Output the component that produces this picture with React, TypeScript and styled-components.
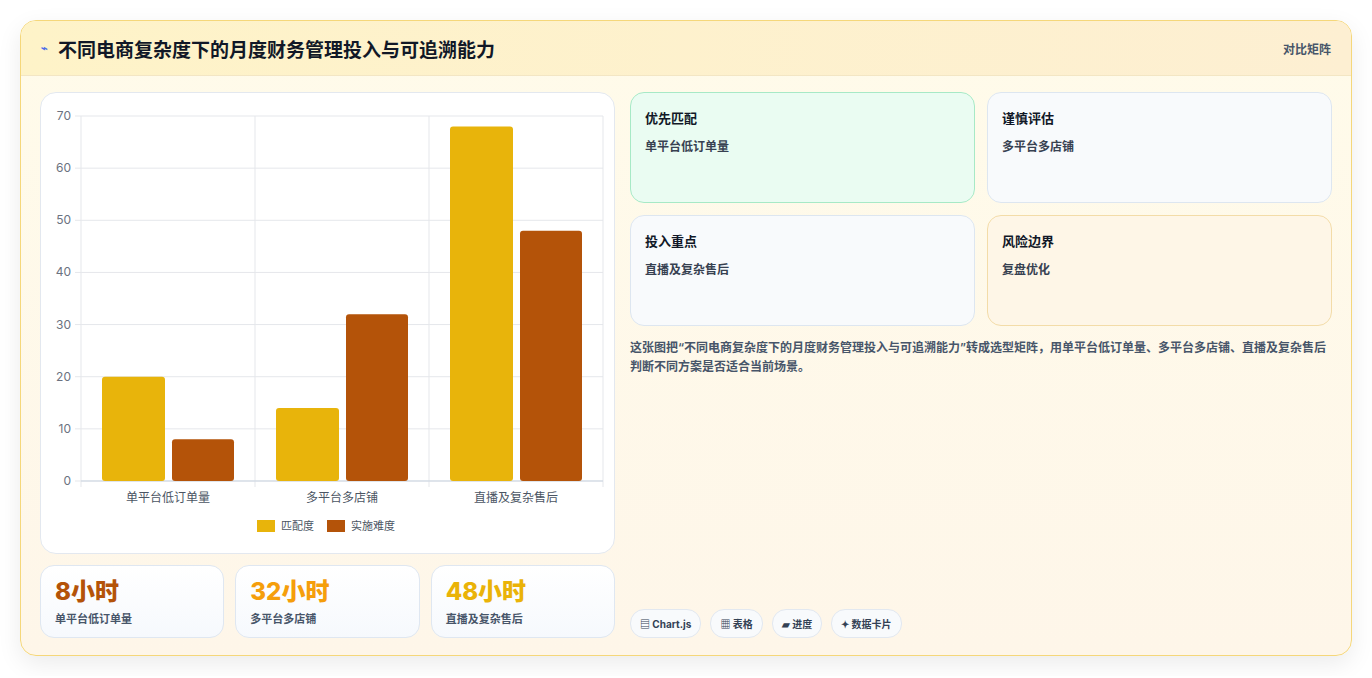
import React from "react";
import styled, { createGlobalStyle } from "styled-components";

const G = createGlobalStyle`
  body { margin:0; background:#fff; font-family: Inter, "Noto Sans CJK SC", sans-serif; }
`;
const Page = styled.div`padding:20px;`;
const Card = styled.div`
  height:636px; box-sizing:border-box; border:1px solid #f5d77a; border-radius:16px; overflow:hidden;
  background:linear-gradient(180deg,#fffbea,#fef6e9);
  box-shadow:0 8px 24px rgba(0,0,0,0.08); display:flex; flex-direction:column;
`;
const Header = styled.div`
  height:55px; flex:none; box-sizing:border-box; display:flex; align-items:center; justify-content:space-between;
  padding:0 20px; background:linear-gradient(90deg,#fef3c8,#fdefd2); border-bottom:1px solid #f3e6c4;
`;
const Title = styled.h1`margin:0; font-size:19px; font-weight:700; color:#111827; display:flex; align-items:center; gap:10px;`;
const Tag = styled.span`font-size:12px; color:#475569; font-weight:600;`;
const Body = styled.div`flex:1; display:grid; grid-template-columns:575px 1fr; gap:15px; padding:16px 19px 19px 19px;`;
const Col = styled.div`display:flex; flex-direction:column; gap:11px; min-height:0;`;
const ChartCard = styled.div`height:462px; box-sizing:border-box; background:#fff; border:1px solid #e3e8ef; border-radius:16px;`;
const Stats = styled.div`display:grid; grid-template-columns:repeat(3,1fr); gap:11px;`;
const Stat = styled.div`
  height:73px; box-sizing:border-box; border:1px solid #dfe7f1; border-radius:14px; padding:10px 14px;
  background:linear-gradient(180deg,#fff,#f6f9fd);
`;
const Big = styled.div<{ c: string }>`font-size:24px; font-weight:800; color:${p => p.c}; line-height:32px;`;
const Small = styled.div`font-size:11px; color:#475569; font-weight:600; margin-top:2px;`;
const Grid = styled.div`display:grid; grid-template-columns:1fr 1fr; gap:12px;`;
const Box = styled.div<{ bg: string; bd: string }>`
  height:111px; box-sizing:border-box; border-radius:14px; padding:15px 14px; background:${p => p.bg}; border:1px solid ${p => p.bd};
`;
const BoxT = styled.div`font-size:13px; font-weight:700; color:#111827;`;
const BoxS = styled.div`font-size:12px; font-weight:600; color:#374151; margin-top:10px;`;
const Para = styled.p`margin:0; font-size:12px; font-weight:600; color:#475569; line-height:19px;`;
const Tags = styled.div`margin-top:auto; display:flex; gap:9px;`;
const Pill = styled.span`
  font-size:10px; font-weight:700; color:#334155; border:1px solid #e2e8f0; background:#f8fafc; border-radius:14px; padding:6px 9px;
`;

const data = [["单平台低订单量", 20, 8], ["多平台多店铺", 14, 32], ["直播及复杂售后", 68, 48]] as const;

function Chart() {
  const x0 = 40, y0 = 388, w = 174, s = 365 / 70;
  return (
    <svg width="573" height="460" style={{ display: "block" }}>
      {[0, 10, 20, 30, 40, 50, 60, 70].map(v => (
        <g key={v}>
          <line x1={x0 - 6} x2={562} y1={y0 - v * s} y2={y0 - v * s} stroke="#e5e7eb" />
          <text x={x0 - 10} y={y0 - v * s + 4} fontSize="12" fill="#6b7280" textAnchor="end">{v}</text>
        </g>
      ))}
      {[0, 1, 2, 3].map(i => <line key={i} x1={x0 + i * w} x2={x0 + i * w} y1={23} y2={y0 + 6} stroke="#e5e7eb" />)}
      <line x1={x0} x2={562} y1={y0} y2={y0} stroke="#cbd5e1" />
      {data.map(([n, a, b], i) => (
        <g key={n}>
          <rect x={x0 + i * w + 21} y={y0 - a * s} width={63} height={a * s} rx={3} fill="#e8b40b" />
          <rect x={x0 + i * w + 91} y={y0 - b * s} width={62} height={b * s} rx={3} fill="#b45309" />
          <text x={x0 + i * w + 87} y={409} fontSize="12" fill="#4b5563" textAnchor="middle">{n}</text>
        </g>
      ))}
      <rect x={216} y={427} width={18} height={12} fill="#e8b40b" />
      <text x={240} y={437} fontSize="11" fill="#4b5563">匹配度</text>
      <rect x={286} y={427} width={18} height={12} fill="#b45309" />
      <text x={310} y={437} fontSize="11" fill="#4b5563">实施难度</text>
    </svg>
  );
}

export default function App() {
  return (
    <Page>
      <G />
      <Card>
        <Header>
          <Title><span style={{ fontSize: 11, color: "#4f6ee8" }}>⌁</span>不同电商复杂度下的月度财务管理投入与可追溯能力</Title>
          <Tag>对比矩阵</Tag>
        </Header>
        <Body>
          <Col>
            <ChartCard><Chart /></ChartCard>
            <Stats>
              <Stat><Big c="#b45309">8小时</Big><Small>单平台低订单量</Small></Stat>
              <Stat><Big c="#f59e0b">32小时</Big><Small>多平台多店铺</Small></Stat>
              <Stat><Big c="#eab308">48小时</Big><Small>直播及复杂售后</Small></Stat>
            </Stats>
          </Col>
          <Col style={{ gap: 12 }}>
            <Grid>
              <Box bg="#eafcf2" bd="#a7e9c6"><BoxT>优先匹配</BoxT><BoxS>单平台低订单量</BoxS></Box>
              <Box bg="#f8fafc" bd="#dde6f0"><BoxT>谨慎评估</BoxT><BoxS>多平台多店铺</BoxS></Box>
              <Box bg="#f8fafc" bd="#dde6f0"><BoxT>投入重点</BoxT><BoxS>直播及复杂售后</BoxS></Box>
              <Box bg="#fef6e7" bd="#f3dca8"><BoxT>风险边界</BoxT><BoxS>复盘优化</BoxS></Box>
            </Grid>
            <Para>这张图把“不同电商复杂度下的月度财务管理投入与可追溯能力”转成选型矩阵，用单平台低订单量、多平台多店铺、直播及复杂售后判断不同方案是否适合当前场景。</Para>
            <Tags>
              <Pill>▤ Chart.js</Pill><Pill>▦ 表格</Pill><Pill>▰ 进度</Pill><Pill>✦ 数据卡片</Pill>
            </Tags>
          </Col>
        </Body>
      </Card>
    </Page>
  );
}
